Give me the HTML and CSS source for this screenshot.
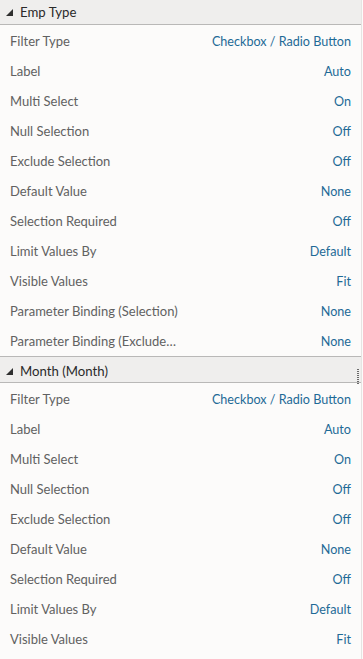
FILE: index.html
```html
<!DOCTYPE html>
<html>
<head>
<meta charset="utf-8">
<link rel="stylesheet" href="styles.css">
</head>
<body>
<div class="panel">
  <section class="group">
    <div class="group-head"><span class="tri"></span><span class="title">Emp Type</span></div>
    <div class="rows">
      <div class="row"><span class="lbl">Filter Type</span><span class="val">Checkbox / Radio Button</span></div>
      <div class="row"><span class="lbl">Label</span><span class="val">Auto</span></div>
      <div class="row"><span class="lbl">Multi Select</span><span class="val">On</span></div>
      <div class="row"><span class="lbl">Null Selection</span><span class="val">Off</span></div>
      <div class="row"><span class="lbl">Exclude Selection</span><span class="val">Off</span></div>
      <div class="row"><span class="lbl">Default Value</span><span class="val">None</span></div>
      <div class="row"><span class="lbl">Selection Required</span><span class="val">Off</span></div>
      <div class="row"><span class="lbl">Limit Values By</span><span class="val">Default</span></div>
      <div class="row"><span class="lbl">Visible Values</span><span class="val">Fit</span></div>
      <div class="row"><span class="lbl">Parameter Binding (Selection)</span><span class="val">None</span></div>
      <div class="row"><span class="lbl">Parameter Binding (Exclude…</span><span class="val">None</span></div>
    </div>
  </section>
  <section class="group">
    <div class="group-head second"><span class="tri"></span><span class="title">Month (Month)</span><span class="grip"></span></div>
    <div class="rows">
      <div class="row"><span class="lbl">Filter Type</span><span class="val">Checkbox / Radio Button</span></div>
      <div class="row"><span class="lbl">Label</span><span class="val">Auto</span></div>
      <div class="row"><span class="lbl">Multi Select</span><span class="val">On</span></div>
      <div class="row"><span class="lbl">Null Selection</span><span class="val">Off</span></div>
      <div class="row"><span class="lbl">Exclude Selection</span><span class="val">Off</span></div>
      <div class="row"><span class="lbl">Default Value</span><span class="val">None</span></div>
      <div class="row"><span class="lbl">Selection Required</span><span class="val">Off</span></div>
      <div class="row"><span class="lbl">Limit Values By</span><span class="val">Default</span></div>
      <div class="row"><span class="lbl">Visible Values</span><span class="val">Fit</span></div>
    </div>
  </section>
</div>
</body>
</html>
```
FILE: styles.css
```css
html, body {
  margin: 0;
  padding: 0;
  background: #fcfbfa;
}
body {
  font-family: Lato, "Noto Sans", sans-serif;
  font-size: 12.6px;
  overflow: hidden;
}
.panel {
  width: 361px;
  border-right: 1px solid #e6e4e2;
  background: #fcfbfa;
  min-height: 659px;
}
.group-head {
  position: relative;
  display: flex;
  align-items: center;
  height: 25px;
  background: #efeeed;
  border-bottom: 1px solid #b9b8b7;
  padding-left: 6px;
  color: #2a2a2a;
  box-sizing: border-box;
}
.group-head.second {
  border-top: 1px solid #b9b8b7;
  height: 27px;
  padding-top: 3px;
}
.tri {
  width: 0;
  height: 0;
  border-left: 7px solid transparent;
  border-bottom: 7px solid #2f2f2f;
  margin-right: 7px;
}
.title {
  font-size: 13.2px;
}
.grip {
  position: absolute;
  right: 2px;
  top: 12px;
  width: 2px;
  height: 16px;
  background: repeating-linear-gradient(to bottom, #6a6a6a 0 1px, transparent 1px 2px);
}
.rows {
  padding-top: 1px;
}
.row {
  display: flex;
  align-items: center;
  justify-content: space-between;
  height: 30px;
  padding: 0 10px;
}
.lbl {
  color: #616161;
  white-space: nowrap;
  font-size: 13px;
}
.val {
  color: #1e6a96;
  white-space: nowrap;
}
```
